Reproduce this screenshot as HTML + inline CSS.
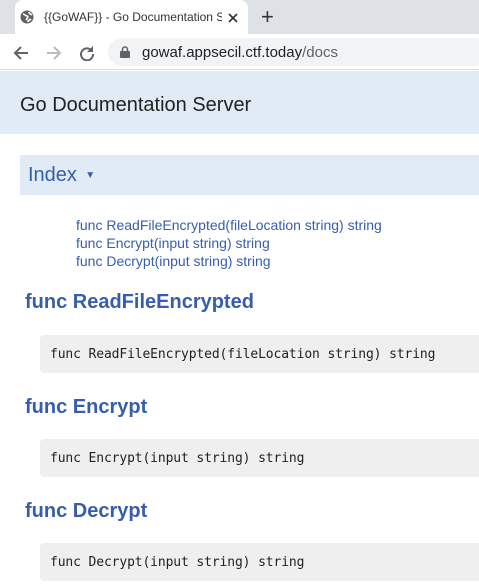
<!DOCTYPE html>
<html><head><style>
*{margin:0;padding:0;box-sizing:border-box}
body{width:479px;height:587px;overflow:hidden;background:#fff;font-family:"Liberation Sans",Arial,sans-serif;position:relative}
.a{position:absolute}
.lnk{color:#375eab;font-size:14px;left:76px}
h2{position:absolute;left:25px;font-size:20px;font-weight:bold;color:#375eab}
.pre{position:absolute;left:40px;width:460px;height:38px;background:#efefef;border-radius:4px;font-family:"DejaVu Sans Mono","Liberation Mono",monospace;font-size:13px;color:#222;padding-left:10px;line-height:40px;letter-spacing:-0.12px}
</style></head><body>
<div class="a" style="left:0;top:0;width:479px;height:34px;background:#dee1e6"></div>
<div class="a" style="left:15px;top:0;width:233px;height:35px;background:#fff;border-radius:8px 8px 0 0"></div>
<svg class="a" style="left:20px;top:10px" width="14" height="14" viewBox="0 0 14 14"><circle cx="7" cy="7" r="6.5" fill="#5f6368"/><path d="M3 4c2 0 2 2 4 2s0 3 -1 4M9 2c0 2 2 2 3 3M8 12c0-2 2-2 3-3" stroke="#fff" stroke-width="1.6" fill="none"/></svg>
<div class="a" style="left:44px;top:10px;font-size:12px;color:#333;width:178px;white-space:nowrap;overflow:hidden">{{GoWAF}} - Go Documentation Server</div>
<svg class="a" style="left:228px;top:13px" width="10" height="10" viewBox="0 0 10 10"><path d="M1 1l8 8M9 1l-8 8" stroke="#333" stroke-width="1.6"/></svg>
<div class="a" style="left:261px;top:4px;font-size:22px;color:#333">+</div>
<div class="a" style="left:0;top:34px;width:479px;height:36px;background:#fff;border-bottom:1px solid #ddd"></div>
<svg class="a" style="left:13px;top:45px" width="16" height="16" viewBox="0 0 16 16"><path d="M15 8H2M8 2L2 8l6 6" stroke="#5f6368" stroke-width="2" fill="none"/></svg>
<svg class="a" style="left:46px;top:45px" width="16" height="16" viewBox="0 0 16 16"><path d="M1 8h13M8 2l6 6-6 6" stroke="#bbb" stroke-width="2" fill="none"/></svg>
<svg class="a" style="left:79px;top:45px" width="16" height="16" viewBox="0 0 16 16"><path d="M13 6A6 6 0 1 0 14 9" stroke="#5f6368" stroke-width="2" fill="none"/><path d="M14 1v6h-6z" fill="#5f6368"/></svg>
<div class="a" style="left:108px;top:38px;width:380px;height:28px;background:#f1f3f4;border-radius:14px"></div>
<svg class="a" style="left:120px;top:46px" width="10" height="12" viewBox="0 0 10 12"><rect x="0" y="5" width="10" height="7" rx="1" fill="#5f6368"/><path d="M2.5 5V3.5a2.5 2.5 0 0 1 5 0V5" stroke="#5f6368" stroke-width="1.6" fill="none"/></svg>
<div class="a" style="left:142px;top:44px;font-size:15px;color:#202124">gowaf.appsecil.ctf.today<span style="color:#5f6368">/docs</span></div>
<div class="a" style="left:0;top:71px;width:479px;height:63px;background:#e0ebf5"></div>
<div class="a" style="left:20px;top:94px;font-size:20px;color:#222">Go Documentation Server</div>
<div class="a" style="left:20px;top:155px;width:459px;height:40px;background:#e0ebf5"></div>
<div class="a" style="left:28px;top:164px;font-size:20px;color:#375eab">Index <span style="font-size:10px;vertical-align:3px">&nbsp;▼</span></div>
<div class="a lnk" style="top:217px">func ReadFileEncrypted(fileLocation string) string</div>
<div class="a lnk" style="top:235px">func Encrypt(input string) string</div>
<div class="a lnk" style="top:253px">func Decrypt(input string) string</div>
<h2 style="top:291px">func ReadFileEncrypted</h2>
<div class="pre" style="top:335px">func ReadFileEncrypted(fileLocation string) string</div>
<h2 style="top:396px">func Encrypt</h2>
<div class="pre" style="top:439px">func Encrypt(input string) string</div>
<h2 style="top:500px">func Decrypt</h2>
<div class="pre" style="top:543px">func Decrypt(input string) string</div>
</body></html>
